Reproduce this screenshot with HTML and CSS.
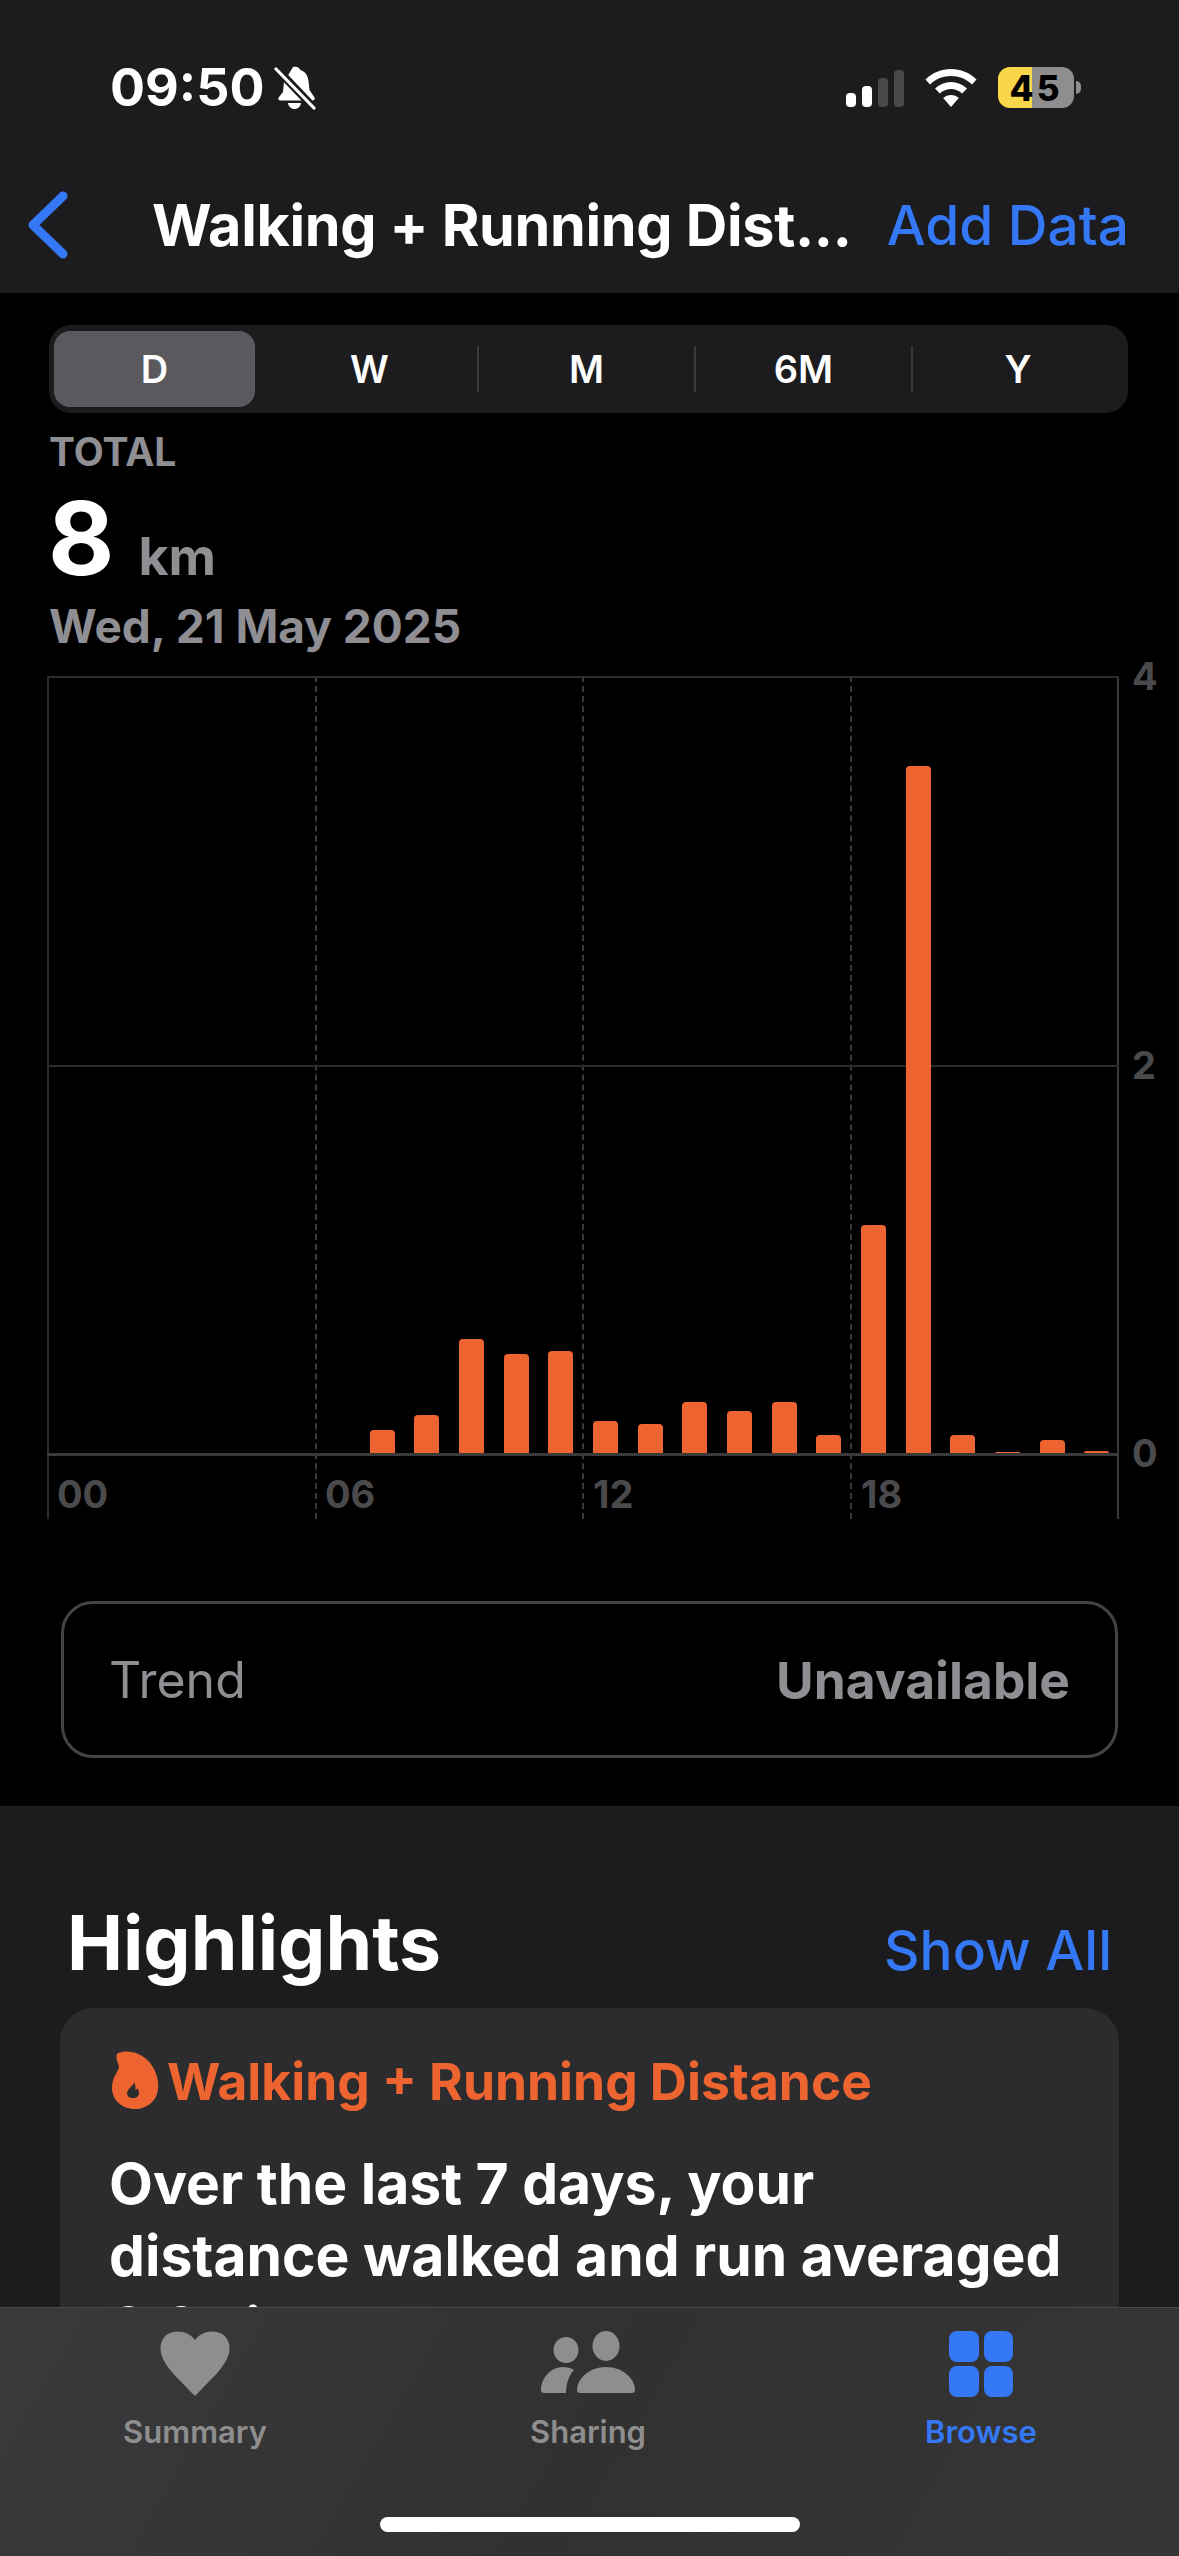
FILE: index.html
```html
<!DOCTYPE html>
<html lang="en">
<head>
    <meta charset="UTF-8">
    <title>Walking + Running Distance</title>
    <link rel="stylesheet" href="styles.css">
</head>
<body>
<div class="phone">
    <header class="top">
        <div class="status">
            <div class="status-left">
                <span class="time">09:50</span>
                <svg class="bell" width="42" height="44" viewBox="0 0 42 44">
                    <path fill="#fff" d="M19 1c3-1 6 0 7.500 3 5 1.500 7.500 6 8 11l1 9 5 7.500c.5 1.500 0 2.500-1.500 3l-32 0c-2.500 0-3.500-1.500-2-3.500l4-5 1-10z"/>
                    <path fill="#fff" d="M14 37h13c-.5 3.500-3 6-6.500 6s-6-2.500-6.500-6z"/>
                    <path stroke="#1c1c1e" stroke-width="8" d="M2 2l38 40"/>
                    <path stroke="#fff" stroke-width="3.200" stroke-linecap="round" d="M2 3l38 39"/>
                </svg>
            </div>
            <div class="status-right">
                <div class="signal">
                    <i class="sig sig1 on"></i>
                    <i class="sig sig2 on"></i>
                    <i class="sig sig3"></i>
                    <i class="sig sig4"></i>
                </div>
                <svg class="wifi" width="52" height="38" viewBox="0 0 52 38">
                    <path fill="#fff" d="M26 0c9.500 0 18.500 3.500 25.500 10.500l-4.500 5C41 9.800 33.800 7 26 7S11 9.800 5 15.500L.5 10.500C7.500 3.500 16.500 0 26 0z"/>
                    <path fill="#fff" d="M26 13c6 0 11.500 2.200 16 6.500l-4.800 5C34 21.500 30 20 26 20s-8 1.500-11.200 4.500l-4.800-5C14.500 15.200 20 13 26 13z"/>
                    <path fill="#fff" d="M26 26c3 0 5.500 1 7.800 3L26 38l-7.800-9c2.300-2 4.800-3 7.800-3z"/>
                </svg>
                <div class="battery">
                    <div class="battery-body"><span>45</span></div>
                    <i class="battery-nub"></i>
                </div>
            </div>
        </div>
        <nav class="nav">
            <svg class="back" width="42" height="68" viewBox="0 0 42 68">
                <path fill="none" stroke="#3478f6" stroke-width="9" stroke-linecap="round" stroke-linejoin="round" d="M36 5L6 34l30 29"/>
            </svg>
            <div class="nav-title">Walking + Running Dist...</div>
            <div class="nav-action">Add Data</div>
        </nav>
    </header>

    <main class="content">
        <section class="dark">
            <div class="segments">
                <div class="seg active">D</div>
                <div class="seg">W</div>
                <i class="seg-line"></i>
                <div class="seg">M</div>
                <i class="seg-line"></i>
                <div class="seg">6M</div>
                <i class="seg-line"></i>
                <div class="seg seg-last">Y</div>
            </div>

            <div class="total-label">TOTAL</div>
            <div class="total"><span class="total-num">8</span><span class="total-unit">km</span></div>
            <div class="date">Wed, 21 May 2025</div>

            <div class="chart">
                <div class="plot">
                    <div class="grid-v">
                        <div class="col"></div>
                        <div class="col"></div>
                        <div class="col"></div>
                        <div class="col"></div>
                    </div>
                    <div class="area">
                        <div class="grid-h"></div>
                        <div class="bars">
                            <i class="slot"></i><i class="slot"></i><i class="slot"></i><i class="slot"></i><i class="slot"></i><i class="slot"></i><i class="slot"></i>
                            <i class="slot"><b class="bar" style="height:23px"></b></i>
                            <i class="slot"><b class="bar" style="height:38px"></b></i>
                            <i class="slot"><b class="bar" style="height:114px"></b></i>
                            <i class="slot"><b class="bar" style="height:99px"></b></i>
                            <i class="slot"><b class="bar" style="height:102px"></b></i>
                            <i class="slot"><b class="bar" style="height:32px"></b></i>
                            <i class="slot"><b class="bar" style="height:29px"></b></i>
                            <i class="slot"><b class="bar" style="height:51px"></b></i>
                            <i class="slot"><b class="bar" style="height:42px"></b></i>
                            <i class="slot"><b class="bar" style="height:51px"></b></i>
                            <i class="slot"><b class="bar" style="height:18px"></b></i>
                            <i class="slot"><b class="bar" style="height:228px"></b></i>
                            <i class="slot"><b class="bar" style="height:687px"></b></i>
                            <i class="slot"><b class="bar" style="height:18px"></b></i>
                            <i class="slot"><b class="bar" style="height:1px"></b></i>
                            <i class="slot"><b class="bar" style="height:13px"></b></i>
                            <i class="slot"><b class="bar" style="height:2px"></b></i>
                        </div>
                    </div>
                    <div class="hours">
                        <span>00</span><span>06</span><span>12</span><span>18</span>
                    </div>
                </div>
                <div class="y-axis">
                    <span>4</span><span>2</span><span>0</span>
                </div>
            </div>

            <div class="trend">
                <span class="trend-label">Trend</span>
                <span class="trend-value">Unavailable</span>
            </div>
        </section>

        <section class="highlights">
            <div class="hl-head">
                <h2>Highlights</h2>
                <span class="show-all">Show All</span>
            </div>
            <div class="card">
                <div class="card-title">
                    <svg class="flame" width="48" height="60" viewBox="0 0 48 60">
                        <path fill="#ee6430" fill-rule="evenodd" d="M6 2c4-1.500 9-2 13-1 9 1 18 7 23 17 3 6 5 13 4 20-1 12-11 20-23 20C10 58 0 49 0 37c0-6 1.500-10 4-14 1.500-3 3-6 3-8C5 10 3 4 6 2zM22 31c0 3-3 4-5 7-1.500 2-2 3-2 4 0 3 2.500 5 6 5s6-2 6-5c0-2-1-4-2-5 0 1-.5 2-1.500 2 0-3 0-6-1.500-8z"/>
                    </svg>
                    <span>Walking + Running Distance</span>
                </div>
                <p class="card-text">Over the last 7 days, your<br>distance walked and run averaged<br>6.6 kilometres per day.</p>
            </div>
        </section>
    </main>

    <footer class="tabs">
        <div class="tab-row">
            <div class="tab">
                <svg width="70" height="66" viewBox="0 0 72 68" preserveAspectRatio="none">
                    <path fill="#8e8e8e" d="M36 67C20 50 .5 34 .5 18 .5 7 8 .5 18 .5c8 0 14 3 18 9 4-6 10-9 18-9 10 0 17.500 6.500 17.500 17.500C71.500 34 52 50 36 67z"/>
                </svg>
                <span>Summary</span>
            </div>
            <div class="tab">
                <svg width="94" height="66" viewBox="0 0 94 66">
                    <ellipse fill="#8e8e8e" cx="25" cy="19" rx="12.500" ry="13"/>
                    <ellipse fill="#8e8e8e" cx="65" cy="15" rx="13.500" ry="15"/>
                    <path fill="#8e8e8e" d="M65 36c17 0 29 12 29 23 0 2-1 3-3 3H39c-2 0-3-1-3-3 0-11 12-23 29-23z"/>
                    <path fill="#8e8e8e" d="M22 36c4 0 8 1 11 3-5 5-8 14-8 23H3c-2 0-3-1-3-3 0-11 9-23 22-23z"/>
                </svg>
                <span>Sharing</span>
            </div>
            <div class="tab tab-active">
                <div class="grid-icon">
                    <i></i><i></i><i></i><i></i>
                </div>
                <span>Browse</span>
            </div>
        </div>
        <div class="home-bar"></div>
    </footer>
</div>
</body>
</html>
```

FILE: styles.css
```css
* {
    box-sizing: border-box;
}
html, body {
    margin: 0;
    padding: 0;
    background: #000;
}
body {
    font-family: Inter, "Noto Sans", sans-serif;
    color: #fff;
}
svg {
    display: block;
}
.phone {
    width: 1179px;
    height: 2556px;
    overflow: hidden;
    display: flex;
    flex-direction: column;
    background: #000;
}

/* status bar + nav */
.top {
    height: 293px;
    flex: none;
    background: #1c1c1e;
}
.status {
    height: 176px;
    padding: 66px 98px 0 110px;
    display: flex;
    justify-content: space-between;
    align-items: flex-start;
}
.status-left {
    display: flex;
    align-items: center;
    gap: 9px;
}
.time {
    font-size: 52px;
    line-height: 44px;
    font-weight: 700;
}
.status-right {
    display: flex;
    align-items: center;
    gap: 21px;
    padding-top: 1px;
}
.signal {
    display: flex;
    align-items: flex-end;
    gap: 6px;
    height: 38px;
}
.sig {
    display: block;
    width: 10px;
    border-radius: 4px;
    background: #4a4a4c;
}
.sig.on {
    background: #fff;
}
.sig1 { height: 14px; }
.sig2 { height: 21px; }
.sig3 { height: 29px; }
.sig4 { height: 37px; }
.battery {
    display: flex;
    align-items: center;
    gap: 2px;
}
.battery-body {
    width: 76px;
    height: 41px;
    border-radius: 12px;
    background: linear-gradient(90deg, #f8d74a 0, #f8d74a 34px, #8e8e8e 34px);
    display: flex;
    align-items: center;
    justify-content: center;
    color: #000;
    font-size: 35px;
    font-weight: 800;
    letter-spacing: 3px;
}
.battery-nub {
    display: block;
    width: 5px;
    height: 13px;
    border-radius: 0 6px 6px 0;
    background: #8e8e8e;
}
.nav {
    display: flex;
    align-items: center;
    height: 72px;
    padding: 0 50px 0 27px;
    margin-top: 13px;
}
.nav-title {
    margin-left: 83px;
    font-size: 57.500px;
    font-weight: 700;
    letter-spacing: -0.3px;
    white-space: nowrap;
}
.nav-action {
    margin-left: auto;
    font-size: 55px;
    font-weight: 500;
    color: #3478f6;
    white-space: nowrap;
}

/* content */
.content {
    flex: 1;
    min-height: 0;
    overflow: hidden;
}
.dark {
    height: 1513px;
    background: #000;
    padding: 32px 51px 0 49px;
}
.segments {
    width: 1079px;
    height: 88px;
    border-radius: 22px;
    background: #1c1c1e;
    padding: 6px 5px;
    display: flex;
    align-items: center;
}
.seg {
    flex: none;
    width: 215px;
    height: 76px;
    border-radius: 16px;
    font-size: 38px;
    font-weight: 600;
    display: flex;
    align-items: center;
    justify-content: center;
}
.seg.active {
    width: 201px;
    margin-right: 7px;
    background: #5a5a5e;
}
.seg-last {
    flex: 1;
}
.seg-line {
    display: block;
    width: 2px;
    height: 46px;
    background: #3a3a3c;
}
.total-label {
    margin-top: 17px;
    font-size: 39px;
    line-height: 44px;
    font-weight: 700;
    color: #8e8e93;
}
.total {
    margin-top: 17px;
    display: flex;
    align-items: baseline;
    height: 94px;
}
.total-num {
    margin-left: -1px;
    font-size: 102px;
    line-height: 94px;
    font-weight: 700;
}
.total-unit {
    margin-left: 24px;
    font-size: 52px;
    font-weight: 700;
    color: #8e8e93;
}
.date {
    margin-top: 15px;
    font-size: 46px;
    line-height: 52px;
    font-weight: 700;
    color: #8e8e93;
}

/* chart */
.chart {
    margin-top: 24px;
    margin-left: -2px;
    display: flex;
    height: 843px;
}
.plot {
    position: relative;
    width: 1072px;
    flex: none;
}
.grid-v {
    position: absolute;
    inset: 0;
    display: flex;
    border-right: 2px solid #3a3a3c;
}
.col {
    flex: 1;
    border-left: 2px dashed #3a3a3c;
}
.col:first-child {
    border-left: 2px solid #2c2c2e;
}
.area {
    position: relative;
    height: 780px;
    border-top: 2px solid #2c2c2e;
    border-bottom: 3px solid #3a3a3c;
}
.grid-h {
    position: absolute;
    left: 0;
    right: 0;
    top: 387px;
    height: 2px;
    background: #2c2c2e;
}
.bars {
    position: absolute;
    inset: 0;
    display: flex;
    align-items: flex-end;
}
.slot {
    display: flex;
    flex: 1;
    justify-content: center;
    align-items: flex-end;
}
.bar {
    display: block;
    width: 25px;
    border-radius: 4px 4px 0 0;
    background: #ee6430;
}
.hours {
    position: relative;
    display: flex;
    padding-top: 16px;
}
.hours span {
    flex: 1;
    padding-left: 10px;
    font-size: 38px;
    line-height: 44px;
    font-weight: 700;
    color: #4a4a4c;
}
.y-axis {
    margin-top: -22px;
    padding-left: 13px;
    height: 821px;
    display: flex;
    flex-direction: column;
    justify-content: space-between;
    font-size: 38px;
    line-height: 44px;
    font-weight: 700;
    color: #4a4a4c;
}

.trend {
    margin-top: 82px;
    margin-left: 12px;
    width: 1057px;
    height: 157px;
    border: 3px solid #444446;
    border-radius: 32px;
    padding: 0 45px;
    display: flex;
    align-items: center;
    justify-content: space-between;
    color: #8e8e93;
    font-size: 50px;
}
.trend-value {
    font-size: 51.500px;
    font-weight: 700;
}

/* highlights */
.highlights {
    background: #1c1c1e;
    padding: 0 60px;
    height: 600px;
}
.hl-head {
    height: 202px;
    padding: 96px 7px 0;
    display: flex;
    justify-content: space-between;
    align-items: baseline;
}
.hl-head h2 {
    margin: 0;
    font-size: 75px;
    line-height: 82px;
    font-weight: 700;
}
.show-all {
    font-size: 55px;
    font-weight: 500;
    line-height: 72px;
    color: #3478f6;
}
.card {
    height: 500px;
    border-radius: 34px;
    background: #2c2c2e;
    padding: 42px 40px 0 49px;
}
.card-title {
    display: flex;
    align-items: center;
    gap: 7px;
    font-size: 51.500px;
    font-weight: 700;
    color: #ee6430;
    margin-left: 3px;
}
.card-text {
    margin: 36px 0 0;
    font-size: 57px;
    line-height: 72px;
    font-weight: 700;
    white-space: nowrap;
}

/* tab bar */
.tabs {
    height: 249px;
    flex: none;
    background: linear-gradient(120deg, #3a3a3c 0, #313132 50%, #363637 100%);
    border-top: 1px solid #4a4a4c;
    position: relative;
}
.tab-row {
    display: flex;
    justify-content: space-between;
    padding: 23px 125px 0 122px;
}
.tab {
    width: 146px;
    display: flex;
    flex-direction: column;
    align-items: center;
    gap: 16px;
    font-size: 31px;
    line-height: 38px;
    font-weight: 600;
    color: #8e8e8e;
}
.tab-active {
    color: #3478f6;
}
.grid-icon {
    width: 64px;
    height: 66px;
    display: grid;
    grid-template-columns: 1fr 1fr;
    grid-template-rows: 1fr 1fr;
    gap: 4px 5px;
}
.grid-icon i {
    display: block;
    background: #3478f6;
    border-radius: 8px;
}
.home-bar {
    position: absolute;
    left: 380px;
    bottom: 24px;
    width: 420px;
    height: 15px;
    border-radius: 8px;
    background: #fff;
}
```
